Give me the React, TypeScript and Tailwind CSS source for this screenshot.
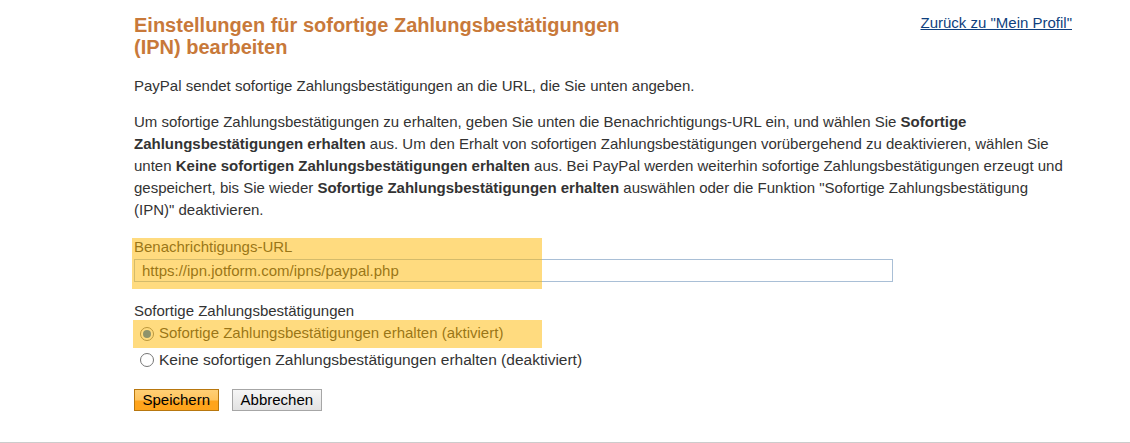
import React from "react";

const Radio = ({ checked }: { checked?: boolean }) => (
  <span className="ml-[6px] mr-[5px] flex h-[14px] w-[14px] shrink-0 items-center justify-center rounded-full border border-[#767676] bg-white">
    {checked && <span className="h-[8px] w-[8px] rounded-full bg-[#1f6fd6]" />}
  </span>
);

const App = () => {
  return (
    <div className="w-full border-b border-[#cccccc] bg-white pb-[31px] font-['Liberation_Sans',Arial,sans-serif] text-[15px] text-[#333333]">
      <div className="ml-[134px] w-[938px]">
        <div className="flex items-start justify-between pt-[14px]">
          <h2 className="w-[500px] text-[20px] leading-[22px] font-bold text-[#c8793a]">
            Einstellungen für sofortige Zahlungsbestätigungen (IPN) bearbeiten
          </h2>
          <a href="#" className="text-[15px] leading-[17px] text-[#0e3f7e] underline">
            Zurück zu "Mein Profil"
          </a>
        </div>

        <p className="mt-[17px] leading-[22px]">
          PayPal sendet sofortige Zahlungsbestätigungen an die URL, die Sie unten angeben.
        </p>
        <p className="mt-[14px] leading-[22px]">
          Um sofortige Zahlungsbestätigungen zu erhalten, geben Sie unten die Benachrichtigungs-URL ein, und wählen Sie{" "}
          <b>Sofortige Zahlungsbestätigungen erhalten</b> aus. Um den Erhalt von sofortigen Zahlungsbestätigungen
          vorübergehend zu deaktivieren, wählen Sie unten <b>Keine sofortigen Zahlungsbestätigungen erhalten</b> aus.
          Bei PayPal werden weiterhin sofortige Zahlungsbestätigungen erzeugt und gespeichert, bis Sie wieder{" "}
          <b>Sofortige Zahlungsbestätigungen erhalten</b> auswählen oder die Funktion "Sofortige Zahlungsbestätigung
          (IPN)" deaktivieren.
        </p>

        <div className="relative mt-[17px] pb-[6px]">
          <label className="block leading-[18px]">Benachrichtigungs-URL</label>
          <input
            readOnly
            value="https://ipn.jotform.com/ipns/paypal.php"
            className="mt-[3px] h-[23px] w-[759px] border border-[#a9bfd6] pl-[7px] text-[15px] text-[#333333] outline-none"
          />
          <div className="pointer-events-none absolute top-0 -left-[2px] h-full w-[410px] bg-[#ffb800]/50" />
        </div>

        <div className="mt-[13px] leading-[18px]">Sofortige Zahlungsbestätigungen</div>
        <div className="relative mt-[1px]">
          <div className="flex h-[26px] items-center">
            <Radio checked />
            <span>Sofortige Zahlungsbestätigungen erhalten (aktiviert)</span>
          </div>
          <div className="flex h-[26px] items-center">
            <Radio />
            <span className="text-[15.5px]">Keine sofortigen Zahlungsbestätigungen erhalten (deaktiviert)</span>
          </div>
          <div className="pointer-events-none absolute -top-[1px] -left-[1px] h-[28px] w-[409px] bg-[#ffb800]/50" />
        </div>

        <div className="mt-[16px] flex gap-[13px]">
          <button className="h-[22px] border border-[#b8770e] bg-[linear-gradient(#ffcf75_0%,#ffc45e_50%,#ffa41c_55%,#ffa41c_100%)] px-[7.5px] text-[15px] leading-[20px] text-black">
            Speichern
          </button>
          <button className="h-[22px] border border-[#a6a6a6] bg-[linear-gradient(#f6f6f6_0%,#ececec_50%,#e2e2e2_100%)] px-[8px] text-[15px] leading-[20px] text-black">
            Abbrechen
          </button>
        </div>
      </div>
    </div>
  );
};

export default App;
